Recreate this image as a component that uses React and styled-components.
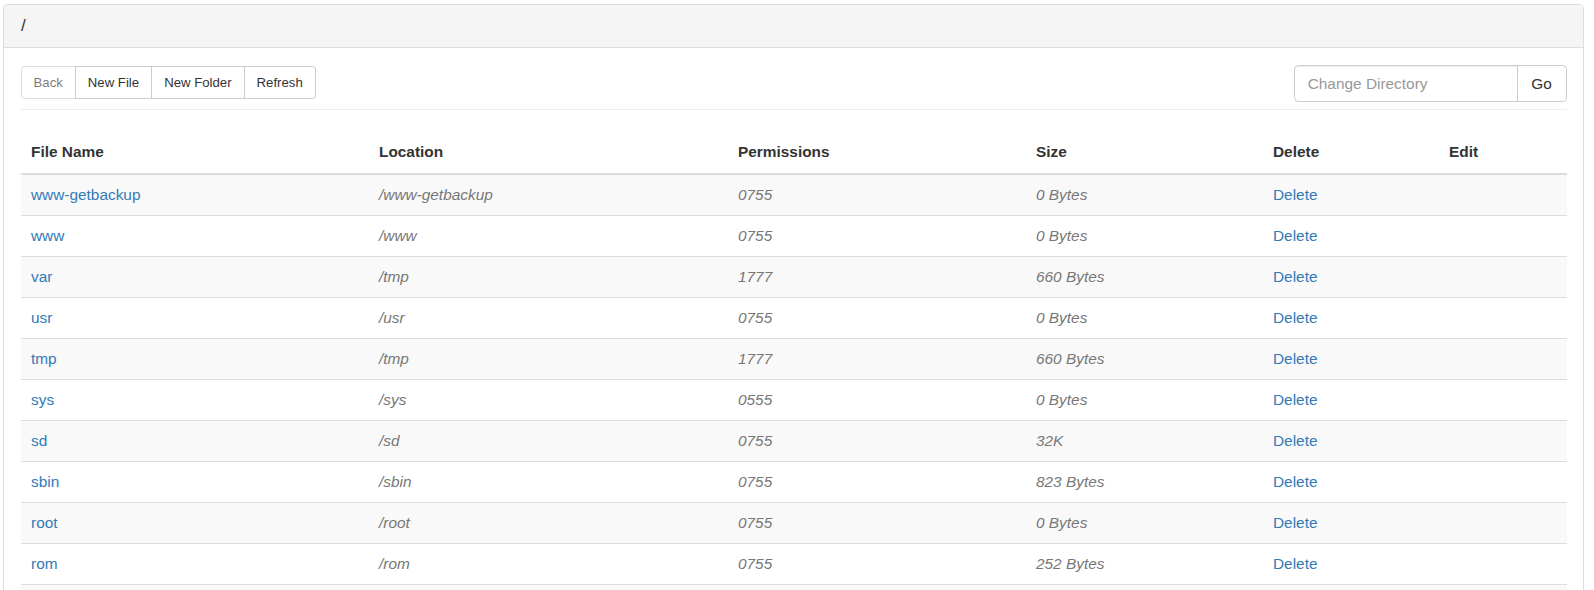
import styled, { createGlobalStyle } from "styled-components";

const GlobalStyle = createGlobalStyle`
  * { box-sizing: border-box; }
  body {
    margin: 0;
    background: #fff;
    font-family: "Liberation Sans", Arial, sans-serif;
    font-size: 15.4px;
    line-height: 22px;
    color: #333;
  }
`;

const files = [
  { name: "www-getbackup", location: "/www-getbackup", perms: "0755", size: "0 Bytes" },
  { name: "www", location: "/www", perms: "0755", size: "0 Bytes" },
  { name: "var", location: "/tmp", perms: "1777", size: "660 Bytes" },
  { name: "usr", location: "/usr", perms: "0755", size: "0 Bytes" },
  { name: "tmp", location: "/tmp", perms: "1777", size: "660 Bytes" },
  { name: "sys", location: "/sys", perms: "0555", size: "0 Bytes" },
  { name: "sd", location: "/sd", perms: "0755", size: "32K" },
  { name: "sbin", location: "/sbin", perms: "0755", size: "823 Bytes" },
  { name: "root", location: "/root", perms: "0755", size: "0 Bytes" },
  { name: "rom", location: "/rom", perms: "0755", size: "252 Bytes" },
];

const columns = [
  { label: "File Name", width: 348 },
  { label: "Location", width: 359 },
  { label: "Permissions", width: 298 },
  { label: "Size", width: 237 },
  { label: "Delete", width: 176 },
  { label: "Edit" },
];

export default function App() {
  return (
    <>
      <GlobalStyle />
      <Page>
        <Panel>
          <PanelHeading>/</PanelHeading>
          <PanelBody>
            <Toolbar>
              <ButtonGroup>
                <SmallButton disabled>Back</SmallButton>
                <SmallButton>New File</SmallButton>
                <SmallButton>New Folder</SmallButton>
                <SmallButton>Refresh</SmallButton>
              </ButtonGroup>
              <InputGroup>
                <DirInput placeholder="Change Directory" />
                <GoButton>Go</GoButton>
              </InputGroup>
            </Toolbar>
            <Divider />
            <Table>
              <thead>
                <tr>
                  {columns.map((c) => (
                    <Th key={c.label} $width={c.width}>
                      {c.label}
                    </Th>
                  ))}
                </tr>
              </thead>
              <tbody>
                {files.map((f, i) => (
                  <Row key={f.name} $striped={i % 2 === 0}>
                    <Td>
                      <FileLink href="#">{f.name}</FileLink>
                    </Td>
                    <Td>
                      <Muted>{f.location}</Muted>
                    </Td>
                    <Td>
                      <Muted>{f.perms}</Muted>
                    </Td>
                    <Td>
                      <Muted>{f.size}</Muted>
                    </Td>
                    <Td>
                      <FileLink href="#">Delete</FileLink>
                    </Td>
                    <Td></Td>
                  </Row>
                ))}
                <Row $striped>
                  <EmptyTd colSpan={6} />
                </Row>
              </tbody>
            </Table>
          </PanelBody>
        </Panel>
      </Page>
    </>
  );
}

const Page = styled.div`
  padding: 4px 10px 0 3px;
  height: 590px;
  overflow: hidden;
`;

const Panel = styled.div`
  border: 1px solid #ddd;
  border-radius: 4.4px;
  background: #fff;
  box-shadow: 0 1px 1px rgba(0, 0, 0, 0.05);
`;

const PanelHeading = styled.div`
  background: #f5f5f5;
  border-bottom: 1px solid #ddd;
  border-radius: 3.4px 3.4px 0 0;
  padding: 10px 17px 11px;
  font-size: 17px;
  line-height: 21px;
  color: #333;
`;

const PanelBody = styled.div`
  padding: 18px 16.5px 17px;
`;

const Toolbar = styled.div`
  display: flex;
  justify-content: space-between;
  align-items: flex-start;
`;

const ButtonGroup = styled.div`
  display: flex;
`;

const SmallButton = styled.button`
  font-family: inherit;
  font-size: 13.2px;
  line-height: 19.8px;
  padding: 5.6px 12px;
  color: #333;
  background: #fff;
  border: 1px solid #ccc;
  border-radius: 0;
  margin-left: -1px;
  cursor: pointer;

  &:first-child {
    margin-left: 0;
    border-radius: 3.3px 0 0 3.3px;
  }
  &:last-child {
    border-radius: 0 3.3px 3.3px 0;
  }
  &:disabled {
    opacity: 0.65;
    cursor: not-allowed;
  }
`;

const InputGroup = styled.div`
  display: flex;
  margin-top: -1px;
`;

const DirInput = styled.input`
  width: 224px;
  height: 37px;
  padding: 6.6px 13.2px;
  font-family: inherit;
  font-size: 15.4px;
  color: #555;
  border: 1px solid #ccc;
  border-radius: 4.4px 0 0 4.4px;
  box-shadow: inset 0 1px 1px rgba(0, 0, 0, 0.075);
  outline: none;

  &::placeholder {
    color: #999;
  }
`;

const GoButton = styled.button`
  height: 37px;
  width: 50px;
  margin-left: -1px;
  font-family: inherit;
  font-size: 15.4px;
  color: #333;
  background: #fff;
  border: 1px solid #ccc;
  border-radius: 0 4.4px 4.4px 0;
  cursor: pointer;
`;

const Divider = styled.hr`
  margin: 7px 0 22px;
  border: 0;
  border-top: 1px solid #eee;
`;

const Table = styled.table`
  width: 100%;
  table-layout: fixed;
  border-collapse: collapse;
  border-spacing: 0;
`;

const Th = styled.th`
  width: ${(p) => (p.$width ? `${p.$width}px` : "auto")};
  text-align: left;
  font-weight: bold;
  padding: 9px 9px 9.5px 10.5px;
  line-height: 22px;
  border-bottom: 2px solid #ddd;
  color: #333;
`;

const Row = styled.tr`
  background: ${(p) => (p.$striped ? "#f9f9f9" : "#fff")};
`;

const Td = styled.td`
  padding: 9px 9px 9px 10.5px;
  line-height: 22px;
  border-top: 1px solid #ddd;
  white-space: nowrap;
`;

const EmptyTd = styled(Td)`
  height: 41px;
`;

const FileLink = styled.a`
  color: #337ab7;
  text-decoration: none;
`;

const Muted = styled.i`
  color: #777;
`;
